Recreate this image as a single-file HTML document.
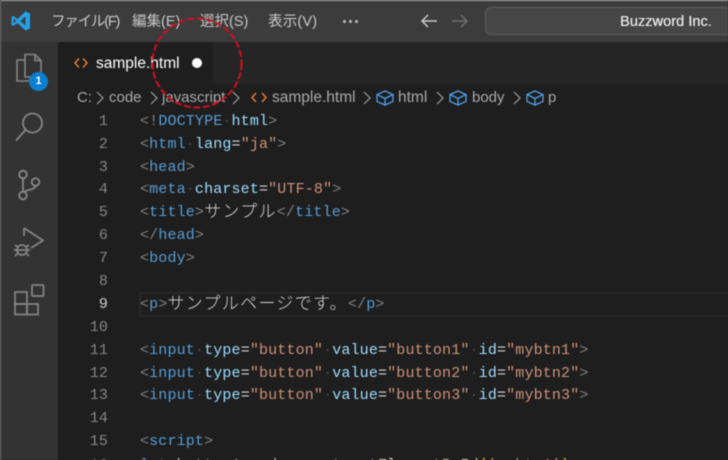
<!DOCTYPE html>
<html><head><meta charset="utf-8"><style>
html,body{margin:0;padding:0;background:#1e1e1e}
#r{position:relative;width:728px;height:460px;overflow:hidden;background:#1e1e1e;font-family:"Liberation Sans","Noto Sans CJK JP",sans-serif;filter:blur(.4px)}
.a{position:absolute;white-space:pre}
.m{color:#c8c8c8;font-size:14.5px;top:12px;line-height:20px}
.l{position:absolute;left:140px;height:23px;font:15px/23px "Liberation Mono",monospace;letter-spacing:.15px;white-space:pre;color:#d4d4d4;margin-top:1px}
.n{position:absolute;left:78px;width:30px;text-align:right;font:15px/23px "Liberation Mono",monospace;letter-spacing:.15px;color:#858585;margin-top:1px}
.g{color:#808080}.t{color:#569cd6}.k{color:#9cdcfe}.s{color:#ce9178}.w{color:#4a4a4a}
.j{font-family:"Noto Sans CJK JP",sans-serif;font-size:17px;line-height:0;letter-spacing:1.3px;color:#d4d4d4;font-weight:300;position:relative;top:1px}
.b{color:#a9a9a9;font-size:15px;top:88px;line-height:20px}
</style></head><body><div id="r">
<div class="a" style="left:0;top:0;width:728px;height:42px;background:#3c3c3c"></div>
<div class="a" style="left:0;top:0;width:728px;height:1px;background:#b5b5b5"></div>
<div class="a" style="left:0;top:0;width:1px;height:460px;background:#777"></div>
<div class="a" style="left:1px;top:42px;width:57px;height:418px;background:#333"></div>
<div class="a" style="left:58px;top:42px;width:670px;height:42px;background:#252526"></div>
<div class="a" style="left:58px;top:42px;width:155px;height:42px;background:#1e1e1e"></div>

<svg class="a" style="left:10px;top:10px" width="22" height="22" viewBox="0 0 22 22"><path d="M15.5 1.5L20 3.5V18.5L15.5 20.5L7.5 13L3.5 16L1.5 15V7L3.5 6L7.5 9Z" fill="#23a0e6"/><path d="M15.5 6.5L10.5 11L15.5 15.5Z" fill="#3c3c3c"/><path d="M3.5 8.5L6 11L3.5 13.5Z" fill="#3c3c3c"/></svg>
<div class="a m" style="left:51px;letter-spacing:-1.2px">ファイル(F)</div>
<div class="a m" style="left:132px">編集(E)</div>
<div class="a m" style="left:200px">選択(S)</div>
<div class="a m" style="left:268px;letter-spacing:.2px">表示(V)</div>
<div class="a" style="left:343px;top:20px;width:3px;height:3px;border-radius:2px;background:#bbb;box-shadow:6px 0 #bbb,12px 0 #bbb"></div>
<svg class="a" style="left:420px;top:12px" width="60" height="18" viewBox="0 0 60 18" fill="none" stroke-width="1.5"><path d="M17 9H2M8 3L2 9L8 15" stroke="#c8c8c8"/><path d="M32 9H47M41 3L47 9L41 15" stroke="#6e6e6e"/></svg>
<div class="a" style="left:485px;top:7px;width:260px;height:26px;background:#464646;border:1px solid #5e5e5e;border-radius:6px"></div>
<div class="a" style="left:620px;top:12px;color:#e8e8e8;font-size:14.5px;line-height:20px;text-shadow:.3px 0 #e8e8e8;letter-spacing:.05px">Buzzword Inc.</div>

<svg class="a" style="left:14px;top:53px" width="32" height="36" viewBox="0 0 32 36" fill="none" stroke="#858585" stroke-width="1.6"><path d="M11 5V1.500H21L27 7.500V24H22"/><path d="M21 1.500V7.500H27"/><path d="M11 7H3V28H16V24"/><path d="M11 5V24H22"/></svg>
<div class="a" style="left:29px;top:72px;width:19px;height:19px;border-radius:50%;background:#0a7fcf;color:#fff;font-size:11px;line-height:19px;text-align:center;font-weight:700">1</div>
<svg class="a" style="left:14px;top:110px" width="32" height="34" viewBox="0 0 32 34" fill="none" stroke="#858585" stroke-width="1.8"><circle cx="18.500" cy="13" r="9.500"/><path d="M11.500 20L2 30.500"/></svg>
<svg class="a" style="left:14px;top:168px" width="30" height="36" viewBox="0 0 30 36" fill="none" stroke="#858585" stroke-width="1.800"><circle cx="9" cy="6.500" r="3.800"/><circle cx="9" cy="27.500" r="3.800"/><circle cx="21.500" cy="14" r="3.800"/><path d="M9 10.500V23.500M21.500 18C21 22 14 21 10 24"/></svg>
<svg class="a" style="left:12px;top:225px" width="34" height="36" viewBox="0 0 34 36" fill="none" stroke="#858585" stroke-width="1.700"><path d="M12 3L31 15.500L19 23M12 3V11"/><circle cx="10" cy="25" r="5"/><path d="M6 25H14M3 20L6 22M17 20L14 22M2 25H5M15 25H18M3 31L6 28M17 31L14 28"/></svg>
<svg class="a" style="left:13px;top:283px" width="34" height="34" viewBox="0 0 34 34" fill="none" stroke="#858585" stroke-width="1.700"><rect x="2" y="9" width="12" height="12"/><rect x="2" y="21" width="12" height="10.500"/><rect x="14" y="21" width="11" height="10.500"/><rect x="19" y="2" width="11.500" height="11" rx="1"/></svg>

<svg class="a" style="left:74px;top:57px" width="14" height="12" viewBox="0 0 14 12" fill="none" stroke="#e37933" stroke-width="1.500"><path d="M5 1.500L1 6L5 10.500M9 1.500L13 6L9 10.500"/></svg>
<div class="a" style="left:96px;top:54px;color:#fff;font-size:15.500px;line-height:20px">sample.html</div>
<div class="a" style="left:192px;top:58px;width:10px;height:10px;border-radius:50%;background:#fff"></div>

<div class="a b" style="left:77px">C:</div>
<div class="a b" style="left:109px">code</div>
<div class="a b" style="left:162px">javascript</div>
<div class="a b" style="left:272px;font-size:15.500px">sample.html</div>
<div class="a b" style="left:398px;font-size:15.500px">html</div>
<div class="a b" style="left:472px">body</div>
<div class="a b" style="left:548px">p</div>
<svg class="a" style="left:0;top:88px" width="728" height="20" fill="none"><g stroke="#a0a0a0" stroke-width="1.200"><path d="M97 4L103 10L97 16M151 4L157 10L151 16M233 4L239 10L233 16M364 4L370 10L364 16M437 4L443 10L437 16M514 4L520 10L514 16"/></g><path d="M256 5L252 9.500L256 14M262 5L266 9.500L262 14" stroke="#e37933" stroke-width="1.500"/><g stroke="#4f9fe6" stroke-width="1.300"><path d="M377 6.500L385 3L393 6.500V13.500L385 17L377 13.500ZM377 6.500L385 10.500L393 6.500M385 10.500V17"/><path d="M450 6.500L458 3L466 6.500V13.500L458 17L450 13.500ZM450 6.500L458 10.500L466 6.500M458 10.500V17"/><path d="M527 6.500L535 3L543 6.500V13.500L535 17L527 13.500ZM527 6.500L535 10.500L543 6.500M535 10.500V17"/></g></svg>

<div class="a" style="left:139px;top:292px;width:600px;height:21px;border:2px solid #282828"></div>

<div class="n" style="top:109px">1</div><div class="n" style="top:132px">2</div><div class="n" style="top:155px">3</div><div class="n" style="top:177px">4</div><div class="n" style="top:200px">5</div><div class="n" style="top:223px">6</div><div class="n" style="top:246px">7</div><div class="n" style="top:269px">8</div><div class="n" style="top:292px;color:#d0d0d0">9</div><div class="n" style="top:315px">10</div><div class="n" style="top:338px">11</div><div class="n" style="top:361px">12</div><div class="n" style="top:383px">13</div><div class="n" style="top:406px">14</div><div class="n" style="top:429px">15</div><div class="n" style="top:453px">16</div>

<div class="l" style="top:109px"><span class="g">&lt;!</span><span class="t">DOCTYPE</span><span class="w">·</span><span class="k">html</span><span class="g">&gt;</span></div>
<div class="l" style="top:132px"><span class="g">&lt;</span><span class="t">html</span><span class="w">·</span><span class="k">lang</span>=<span class="s">"ja"</span><span class="g">&gt;</span></div>
<div class="l" style="top:155px"><span class="g">&lt;</span><span class="t">head</span><span class="g">&gt;</span></div>
<div class="l" style="top:177px"><span class="g">&lt;</span><span class="t">meta</span><span class="w">·</span><span class="k">charset</span>=<span class="s">"UTF-8"</span><span class="g">&gt;</span></div>
<div class="l" style="top:200px"><span class="g">&lt;</span><span class="t">title</span><span class="g">&gt;</span><span class="j">サンプル</span><span class="g">&lt;/</span><span class="t">title</span><span class="g">&gt;</span></div>
<div class="l" style="top:223px"><span class="g">&lt;/</span><span class="t">head</span><span class="g">&gt;</span></div>
<div class="l" style="top:246px"><span class="g">&lt;</span><span class="t">body</span><span class="g">&gt;</span></div>
<div class="l" style="top:292px"><span class="g">&lt;</span><span class="t">p</span><span class="g">&gt;</span><span class="j">サンプルページです。</span><span class="g">&lt;/</span><span class="t">p</span><span class="g">&gt;</span></div>
<div class="l" style="top:338px"><span class="g">&lt;</span><span class="t">input</span><span class="w">·</span><span class="k">type</span>=<span class="s">"button"</span><span class="w">·</span><span class="k">value</span>=<span class="s">"button1"</span><span class="w">·</span><span class="k">id</span>=<span class="s">"mybtn1"</span><span class="g">&gt;</span></div>
<div class="l" style="top:361px"><span class="g">&lt;</span><span class="t">input</span><span class="w">·</span><span class="k">type</span>=<span class="s">"button"</span><span class="w">·</span><span class="k">value</span>=<span class="s">"button2"</span><span class="w">·</span><span class="k">id</span>=<span class="s">"mybtn2"</span><span class="g">&gt;</span></div>
<div class="l" style="top:383px"><span class="g">&lt;</span><span class="t">input</span><span class="w">·</span><span class="k">type</span>=<span class="s">"button"</span><span class="w">·</span><span class="k">value</span>=<span class="s">"button3"</span><span class="w">·</span><span class="k">id</span>=<span class="s">"mybtn3"</span><span class="g">&gt;</span></div>
<div class="l" style="top:429px"><span class="g">&lt;</span><span class="t">script</span><span class="g">&gt;</span></div>
<div class="l" style="top:453px"><span class="t">let</span> <span class="k">button1</span> = <span class="k">document</span>.<span style="color:#dcdcaa">getElementById</span><span style="color:#ffd700">(</span><span class="s">'mybtn1'</span><span style="color:#ffd700">)</span>;</div>

<svg class="a" style="left:0;top:0" width="728" height="460" fill="none"><circle cx="197" cy="63" r="44.500" stroke="#d01020" stroke-width="2" stroke-dasharray="7 2.500"/></svg>
</div></body></html>
